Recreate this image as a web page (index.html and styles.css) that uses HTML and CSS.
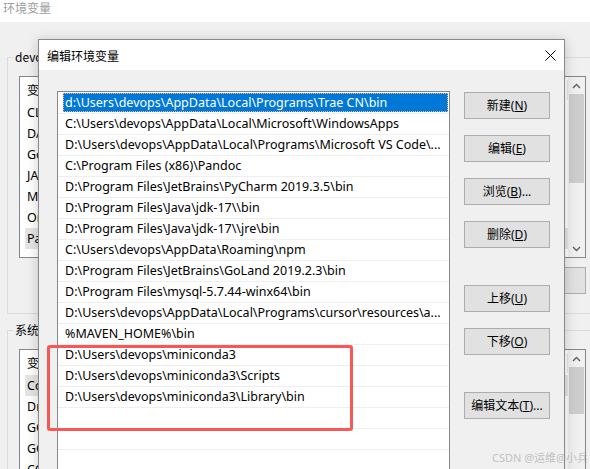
FILE: index.html
```html
<!DOCTYPE html>
<html lang="zh-CN">
<head>
<meta charset="utf-8">
<title>环境变量</title>
<link rel="stylesheet" href="styles.css">
</head>
<body>
  <!-- Parent window: 环境变量 -->
  <div class="env-title">环境变量</div>
  <div class="env-body">
    <fieldset class="group">
      <legend>devops 的用户变量(U)</legend>
      <div class="listview listview-user">
        <div class="lv-main">
          <div class="lv-header"><span class="col-name">变量</span></div>
          <div class="lv-row"><span class="col-name">CLASSPATH</span></div>
          <div class="lv-row"><span class="col-name">DATA_HOME</span></div>
          <div class="lv-row"><span class="col-name">GoLand</span></div>
          <div class="lv-row"><span class="col-name">JAVA_HOME</span></div>
          <div class="lv-row"><span class="col-name">MAVEN_HOME</span></div>
          <div class="lv-row"><span class="col-name">OneDrive</span></div>
          <div class="lv-row is-inactive-sel"><span class="col-name">Path</span></div>
        </div>
        <div class="scrollbar">
          <div class="sb-btn"><svg width="9" height="6" viewBox="0 0 9 6"><polyline points="1,5 4.5,1.5 8,5" fill="none" stroke="#606060" stroke-width="1.4"/></svg></div>
          <div class="sb-thumb thumb-user"></div>
          <div class="sb-track"></div>
          <div class="sb-btn"><svg width="9" height="6" viewBox="0 0 9 6"><polyline points="1,1 4.5,4.5 8,1" fill="none" stroke="#606060" stroke-width="1.4"/></svg></div>
        </div>
      </div>
      <div class="group-actions">
        <button class="btn">删除(<u>D</u>)</button>
      </div>
    </fieldset>

    <fieldset class="group group-system">
      <legend>系统变量(S)</legend>
      <div class="listview listview-system">
        <div class="lv-main">
          <div class="lv-header"><span class="col-name">变量</span></div>
          <div class="lv-row is-inactive-sel"><span class="col-name">ComSpec</span></div>
          <div class="lv-row"><span class="col-name">DriverData</span></div>
          <div class="lv-row"><span class="col-name">GOPATH</span></div>
          <div class="lv-row"><span class="col-name">GOROOT</span></div>
          <div class="lv-row"><span class="col-name">CONDA</span></div>
        </div>
        <div class="scrollbar">
          <div class="sb-btn"><svg width="9" height="6" viewBox="0 0 9 6"><polyline points="1,5 4.5,1.5 8,5" fill="none" stroke="#606060" stroke-width="1.4"/></svg></div>
          <div class="sb-thumb thumb-system"></div>
          <div class="sb-track"></div>
        </div>
      </div>
    </fieldset>
  </div>

  <!-- Modal dialog: 编辑环境变量 -->
  <div class="dialog">
    <div class="dlg-titlebar">
      <span class="dlg-title">编辑环境变量</span>
      <span class="dlg-close">
        <svg width="11" height="11" viewBox="0 0 11 11"><path d="M0.5 0.5 L10.5 10.5 M10.5 0.5 L0.5 10.5" stroke="#000" stroke-width="1" fill="none"/></svg>
      </span>
    </div>
    <div class="dlg-body">
      <div class="path-list">
        <div class="path-row is-selected"><span class="path-text">d:\Users\devops\AppData\Local\Programs\Trae CN\bin</span></div>
        <div class="path-row"><span class="path-text">C:\Users\devops\AppData\Local\Microsoft\WindowsApps</span></div>
        <div class="path-row"><span class="path-text">D:\Users\devops\AppData\Local\Programs\Microsoft VS Code\...</span></div>
        <div class="path-row"><span class="path-text">C:\Program Files (x86)\Pandoc</span></div>
        <div class="path-row"><span class="path-text">D:\Program Files\JetBrains\PyCharm 2019.3.5\bin</span></div>
        <div class="path-row"><span class="path-text">D:\Program Files\Java\jdk-17\\bin</span></div>
        <div class="path-row"><span class="path-text">D:\Program Files\Java\jdk-17\\jre\bin</span></div>
        <div class="path-row"><span class="path-text">C:\Users\devops\AppData\Roaming\npm</span></div>
        <div class="path-row"><span class="path-text">D:\Program Files\JetBrains\GoLand 2019.2.3\bin</span></div>
        <div class="path-row"><span class="path-text">D:\Program Files\mysql-5.7.44-winx64\bin</span></div>
        <div class="path-row"><span class="path-text">D:\Users\devops\AppData\Local\Programs\cursor\resources\a...</span></div>
        <div class="path-row"><span class="path-text">%MAVEN_HOME%\bin</span></div>
        <div class="path-row"><span class="path-text">D:\Users\devops\miniconda3</span></div>
        <div class="path-row"><span class="path-text">D:\Users\devops\miniconda3\Scripts</span></div>
        <div class="path-row"><span class="path-text">D:\Users\devops\miniconda3\Library\bin</span></div>
        <div class="path-row"><span class="path-text"></span></div>
        <div class="path-row"><span class="path-text"></span></div>
        <div class="path-row"><span class="path-text"></span></div>
      </div>
      <div class="dlg-actions">
        <button class="btn">新建(<u>N</u>)</button>
        <button class="btn">编辑(<u>E</u>)</button>
        <button class="btn">浏览(<u>B</u>)...</button>
        <button class="btn">删除(<u>D</u>)</button>
        <button class="btn btn-spaced">上移(<u>U</u>)</button>
        <button class="btn">下移(<u>O</u>)</button>
        <button class="btn btn-spaced">编辑文本(<u>T</u>)...</button>
      </div>
    </div>
  </div>

  <!-- Annotation around the miniconda entries -->
  <div class="highlight-box"></div>

  <div class="watermark">CSDN @运维@小兵</div>
</body>
</html>
```

FILE: styles.css
```css
* {
  box-sizing: border-box;
}

html,
body {
  margin: 0;
}

body {
  width: 590px;
  height: 469px;
  overflow: hidden;
  position: relative;
  background: #f0f0f0;
  color: #000;
  font-family: "Noto Sans", "Noto Sans CJK SC", sans-serif;
  font-size: 12px;
}

/* ---------- parent window ---------- */
.env-title {
  height: 22px;
  background: #fff;
  color: #9d9d9d;
  font-family: "Noto Sans CJK SC", sans-serif;
  font-size: 12px;
  line-height: 15px;
  padding-left: 3px;
}

.env-body {
  width: 600px;
  padding: 27px 0 0 7px;
}

.group {
  margin: 0;
  min-width: 0;
  width: 591px;
  border: 1px solid #dcdcdc;
  padding: 11px 11px 19px 11px;
}

.group legend {
  margin-left: -6px;
  padding: 0 2px;
  font-family: "Noto Sans CJK SC", sans-serif;
  font-size: 12px;
  line-height: 16px;
}

.group-system {
  margin-top: 8px;
}

.listview {
  display: flex;
  width: 567px;
  background: #fff;
  border: 1px solid #828790;
}

.listview-user {
  height: 182px;
}

.listview-system {
  height: 140px;
}

.lv-main {
  flex: 1;
  min-width: 0;
  overflow: hidden;
  font-size: 12.5px;
}

.lv-header {
  display: flex;
  align-items: center;
  height: 25px;
  padding-left: 7px;
  font-family: "Noto Sans CJK SC", sans-serif;
  font-size: 12px;
}

.lv-header::after {
  content: "";
  width: 1px;
  height: 20px;
  margin-left: auto;
  background: #e5e5e5;
}

.lv-row {
  display: flex;
  height: 21px;
  line-height: 21px;
  margin-left: 5px;
  padding-left: 2px;
  white-space: nowrap;
}

.col-name {
  width: 170px;
  flex: none;
}

.lv-row.is-inactive-sel {
  background: #e5e5e5;
}

.scrollbar {
  width: 17px;
  flex: none;
  display: flex;
  flex-direction: column;
  background: #f0f0f0;
}

.sb-btn {
  height: 17px;
  flex: none;
  display: flex;
  align-items: center;
  justify-content: center;
}

.sb-thumb {
  flex: none;
  margin: 0 1px;
  background: #cdcdcd;
}

.thumb-user {
  height: 89px;
}

.thumb-system {
  height: 47px;
}

.sb-track {
  flex: 1;
}

.group-actions {
  display: flex;
  justify-content: flex-end;
  margin-top: 9px;
}

/* ---------- shared push button ---------- */
.btn {
  width: 86px;
  height: 27px;
  padding: 0;
  background: #e1e1e1;
  border: 1px solid #adadad;
  border-radius: 0;
  color: #000;
  font-family: "Noto Sans", "Noto Sans CJK SC", sans-serif;
  font-size: 12px;
  line-height: 25px;
  text-align: center;
}

.btn u {
  text-underline-offset: 1px;
}

/* ---------- modal dialog ---------- */
.dialog {
  position: absolute;
  left: 38px;
  top: 39px;
  width: 527px;
  height: 440px;
  display: flex;
  flex-direction: column;
  background: #f0f0f0;
  border: 1px solid #8a8a8a;
  box-shadow: 0 2px 12px rgba(0, 0, 0, 0.2);
}

.dlg-titlebar {
  height: 30px;
  flex: none;
  display: flex;
  align-items: center;
  justify-content: space-between;
  padding-left: 8px;
  background: #fff;
}

.dlg-title {
  font-family: "Noto Sans CJK SC", sans-serif;
  font-size: 12px;
}

.dlg-close {
  width: 28px;
  height: 30px;
  display: flex;
  align-items: center;
  justify-content: center;
}

.dlg-body {
  flex: 1;
  display: flex;
  gap: 14px;
  padding: 21px 14px 0 18px;
}

.path-list {
  width: 393px;
  flex: none;
  padding-top: 1px;
  background: #fff;
  border: 1px solid #828790;
  font-size: 12.5px;
}

.path-row {
  display: flex;
  height: 21px;
  padding: 0 1px 1px 5px;
  border-bottom: 1px solid #efefef;
}

.path-text {
  flex: 1;
  min-width: 0;
  padding-left: 2px;
  line-height: 20px;
  white-space: nowrap;
  overflow: hidden;
}

.path-row.is-selected .path-text {
  background: #0078d7;
  color: #fff;
  outline: 1px dotted #f2b880;
  outline-offset: -1px;
}

.dlg-actions {
  width: 86px;
  flex: none;
  display: flex;
  flex-direction: column;
  gap: 16px;
  padding-top: 1px;
}

.btn-spaced {
  margin-top: 21px;
}

/* ---------- overlays ---------- */
.highlight-box {
  position: absolute;
  left: 47px;
  top: 345px;
  width: 306px;
  height: 86px;
  border: 3px solid #f95656;
  border-radius: 3px;
}

.watermark {
  position: absolute;
  right: 2px;
  bottom: 4px;
  color: rgba(150, 150, 150, 0.55);
  font-family: "Noto Sans", "Noto Sans CJK SC", sans-serif;
  font-size: 11px;
}
```
